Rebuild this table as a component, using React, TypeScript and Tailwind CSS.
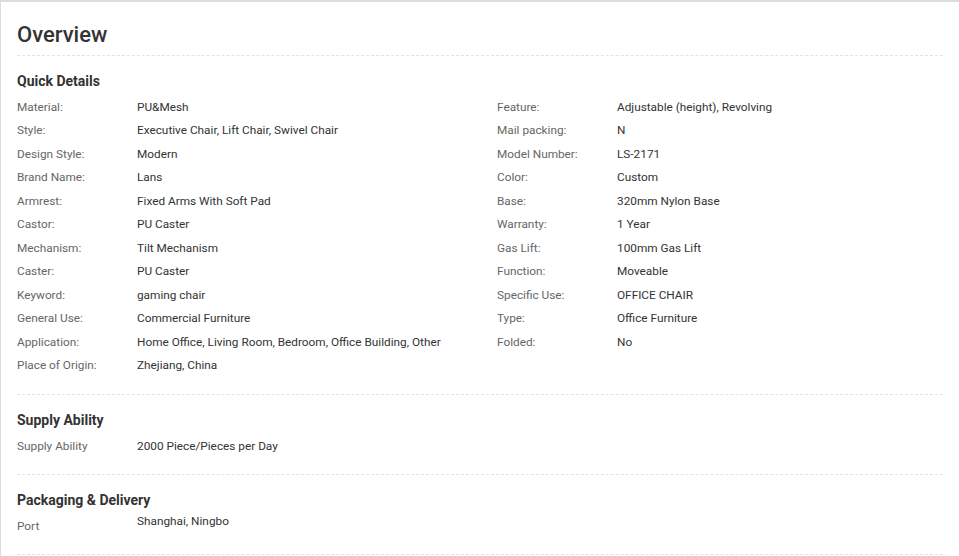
import React from "react";

type Row = [string, string];

const leftRows: Row[] = [
  ["Material:", "PU&Mesh"],
  ["Style:", "Executive Chair, Lift Chair, Swivel Chair"],
  ["Design Style:", "Modern"],
  ["Brand Name:", "Lans"],
  ["Armrest:", "Fixed Arms With Soft Pad"],
  ["Castor:", "PU Caster"],
  ["Mechanism:", "Tilt Mechanism"],
  ["Caster:", "PU Caster"],
  ["Keyword:", "gaming chair"],
  ["General Use:", "Commercial Furniture"],
  ["Application:", "Home Office, Living Room, Bedroom, Office Building, Other"],
  ["Place of Origin:", "Zhejiang, China"],
];

const rightRows: Row[] = [
  ["Feature:", "Adjustable (height), Revolving"],
  ["Mail packing:", "N"],
  ["Model Number:", "LS-2171"],
  ["Color:", "Custom"],
  ["Base:", "320mm Nylon Base"],
  ["Warranty:", "1 Year"],
  ["Gas Lift:", "100mm Gas Lift"],
  ["Function:", "Moveable"],
  ["Specific Use:", "OFFICE CHAIR"],
  ["Type:", "Office Furniture"],
  ["Folded:", "No"],
];

function DetailRow({ label, value, raised }: { label: string; value: string; raised?: boolean }) {
  return (
    <div className="flex leading-[23.45px] text-[11.8px]">
      <div className="w-[120px] shrink-0 text-[#666]">{label}</div>
      <div className={`text-[#333] ${raised ? "-mt-[5px]" : ""}`}>{value}</div>
    </div>
  );
}

function Section({
  title,
  className,
  headClass,
  children,
}: {
  title: string;
  className: string;
  headClass: string;
  children: React.ReactNode;
}) {
  return (
    <div className={`border-b border-dashed border-[#e3e3e3] ${className}`}>
      <h3 className={`text-[14px] leading-5 font-bold text-[#333] ${headClass}`}>{title}</h3>
      {children}
    </div>
  );
}

export default function App() {
  return (
    <div
      className="min-h-[556px] bg-white border-l border-t-2 border-[#dddddd] px-4"
      style={{ fontFamily: "Roboto, 'Liberation Sans', sans-serif" }}
    >
      <div className="pt-[18px] pb-[5px] border-b border-dashed border-[#e3e3e3]">
        <h2 className="text-[22px] leading-[30px] font-medium text-[#333]">Overview</h2>
      </div>

      <Section title="Quick Details" className="pt-[15px] pb-[17px]" headClass="mb-[5px]">
        <div className="flex">
          <div className="w-[480px] shrink-0">
            {leftRows.map(([l, v]) => (
              <DetailRow key={l} label={l} value={v} />
            ))}
          </div>
          <div className="flex-1">
            {rightRows.map(([l, v]) => (
              <DetailRow key={l} label={l} value={v} />
            ))}
          </div>
        </div>
      </Section>

      <Section title="Supply Ability" className="pt-[15px] pb-[15px]" headClass="mb-[5px]">
        <DetailRow label="Supply Ability" value="2000 Piece/Pieces per Day" />
      </Section>

      <Section title="Packaging & Delivery" className="pt-[15px] pb-[15.5px]" headClass="mb-[5px]">
        <DetailRow label="Port" value="Shanghai, Ningbo" raised />
      </Section>
    </div>
  );
}
